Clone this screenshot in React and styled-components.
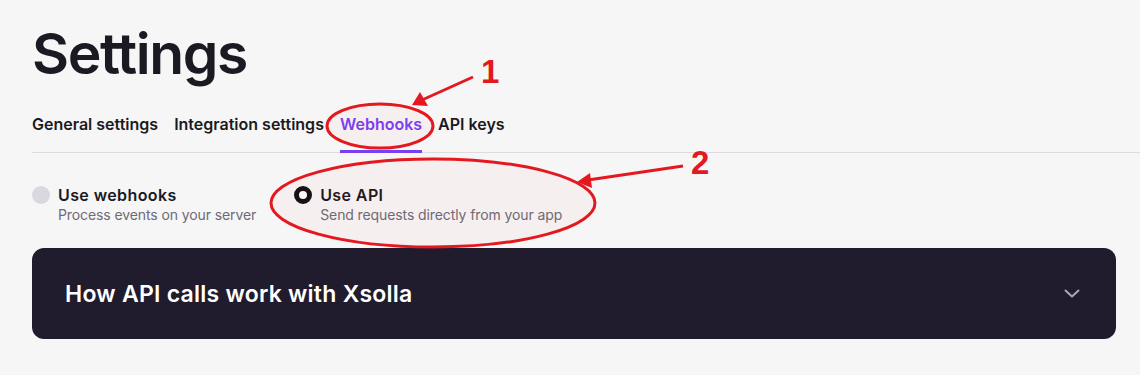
import React from "react";
import styled, { createGlobalStyle } from "styled-components";

const GlobalStyle = createGlobalStyle`
  html, body {
    margin: 0;
    padding: 0;
    background: #f6f6f7;
  }
  body {
    font-family: Inter, "Noto Sans", "Liberation Sans", sans-serif;
    color: #1b1a22;
    -webkit-font-smoothing: antialiased;
  }
`;

const Page = styled.div`
  position: relative;
  width: 1140px;
  height: 375px;
  box-sizing: border-box;
  padding: 25px 24px 0 32px;
  overflow: hidden;
`;

const Title = styled.h1`
  margin: 0;
  font-size: 57px;
  line-height: 57px;
  font-weight: 600;
  letter-spacing: -1.4px;
  color: #1b1a22;
`;

const TabBar = styled.nav`
  display: flex;
  gap: 16px;
  margin: 30px -24px 0 0;
  box-shadow: inset 0 -1px 0 #dddce2;
`;

const Tab = styled.a`
  display: block;
  padding-bottom: 14px;
  border-bottom: 3px solid ${(p) => (p.$active ? "#7b3ff2" : "transparent")};
  font-size: 16px;
  line-height: 24px;
  font-weight: 600;
  color: ${(p) => (p.$active ? "#7b3ff2" : "#1b1a22")};
  text-decoration: none;
  cursor: pointer;
`;

const RadioGroup = styled.div`
  display: flex;
  gap: 38px;
  margin-top: 32px;
`;

const Option = styled.label`
  display: flex;
  align-items: flex-start;
  gap: 8px;
  cursor: pointer;
`;

const Dot = styled.span`
  flex: none;
  width: 18px;
  height: 18px;
  margin-top: 1px;
  box-sizing: border-box;
  border-radius: 50%;
  background: ${(p) => (p.$checked ? "#fff" : "#d9d8df")};
  border: ${(p) => (p.$checked ? "5px solid #111015" : "none")};
`;

const OptionText = styled.span`
  display: flex;
  flex-direction: column;
`;

const OptionLabel = styled.span`
  font-size: 16px;
  line-height: 20px;
  font-weight: 600;
  letter-spacing: 0.4px;
  color: #1b1a22;
`;

const OptionHint = styled.span`
  font-size: 14px;
  line-height: 20px;
  font-weight: 400;
  letter-spacing: -0.1px;
  color: #6d6b77;
`;

const Card = styled.section`
  display: flex;
  align-items: center;
  justify-content: space-between;
  height: 91px;
  margin-top: 23px;
  padding: 0 36px 0 33px;
  border-radius: 12px;
  background: #201c2d;
`;

const CardTitle = styled.h2`
  margin: 0;
  font-size: 23px;
  line-height: 28px;
  font-weight: 600;
  letter-spacing: 0.25px;
  color: #ffffff;
`;

const Overlay = styled.svg`
  position: absolute;
  top: 0;
  left: 0;
  pointer-events: none;
`;

const Chevron = () => (
  <svg width="16" height="10" viewBox="0 0 16 10" fill="none">
    <path d="M1.5 1.5L8 7.5l6.5-6" stroke="#a9a7b3" strokeWidth="2" strokeLinecap="round" strokeLinejoin="round" />
  </svg>
);

// red callouts drawn over the page
const Annotations = () => (
  <Overlay width="1140" height="375" viewBox="0 0 1140 375">
    <ellipse cx="380" cy="126" rx="53" ry="22" fill="rgba(230,30,40,0.03)" stroke="#e3191f" strokeWidth="3" />
    <line x1="473" y1="77" x2="422" y2="100" stroke="#e3191f" strokeWidth="3" />
    <polygon points="412,105 420,92 428,106" fill="#e3191f" />
    <text x="481" y="83" fill="#e3191f" fontFamily="Liberation Sans, Arial, sans-serif" fontWeight="700" fontSize="33">1</text>

    <ellipse cx="433" cy="203" rx="162" ry="44" fill="rgba(230,30,40,0.03)" stroke="#e3191f" strokeWidth="3" />
    <line x1="683" y1="166" x2="588" y2="180" stroke="#e3191f" strokeWidth="3" />
    <polygon points="577,182 590,173 592,188" fill="#e3191f" />
    <text x="691" y="174" fill="#e3191f" fontFamily="Liberation Sans, Arial, sans-serif" fontWeight="700" fontSize="33">2</text>
  </Overlay>
);

export default function App() {
  const tabs = ["General settings", "Integration settings", "Webhooks", "API keys"];
  return (
    <>
      <GlobalStyle />
      <Page>
        <Title>Settings</Title>
        <TabBar>
          {tabs.map((t) => (
            <Tab key={t} $active={t === "Webhooks"}>
              {t}
            </Tab>
          ))}
        </TabBar>
        <RadioGroup>
          <Option>
            <Dot />
            <OptionText>
              <OptionLabel>Use webhooks</OptionLabel>
              <OptionHint>Process events on your server</OptionHint>
            </OptionText>
          </Option>
          <Option>
            <Dot $checked />
            <OptionText>
              <OptionLabel>Use API</OptionLabel>
              <OptionHint>Send requests directly from your app</OptionHint>
            </OptionText>
          </Option>
        </RadioGroup>
        <Card>
          <CardTitle>How API calls work with Xsolla</CardTitle>
          <Chevron />
        </Card>
        <Annotations />
      </Page>
    </>
  );
}
